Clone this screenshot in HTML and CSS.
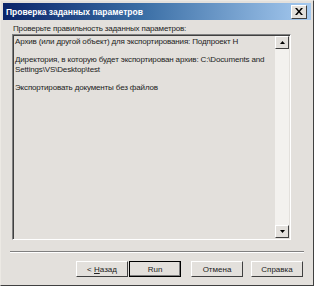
FILE: index.html
```html
<!DOCTYPE html>
<html lang="ru">
<head>
    <meta charset="UTF-8">
    <title>Проверка заданных параметров</title>
    <link rel="stylesheet" href="styles.css">
</head>
<body>
    <div class="dialog">
        <div class="title-bar">
            <span class="title-text">Проверка заданных параметров</span>
            <span class="close-btn">
                <svg width="8" height="7" viewBox="0 0 8 7">
                    <path d="M0 0h2l2 2.5 2-2.5h2l-3 3.5 3 3.5h-2l-2-2.5-2 2.5h-2l3-3.5z" fill="#000"/>
                </svg>
            </span>
        </div>

        <div class="dialog-body">
            <div class="caption">Проверьте правильность заданных параметров:</div>
            <div class="summary">
                <div class="summary-text">
                    <p>Архив (или другой объект) для экспортирования: Подпроект Н</p>
                    <p>Директория, в которую будет экспортирован архив: C:\Documents and Settings\VS\Desktop\test</p>
                    <p>Экспортировать документы без файлов</p>
                </div>
                <div class="scrollbar">
                    <span class="scroll-btn">
                        <svg width="5" height="3" viewBox="0 0 5 3"><path d="M2.5 0L5 3H0z" fill="#000"/></svg>
                    </span>
                    <span class="scroll-track"></span>
                    <span class="scroll-btn">
                        <svg width="5" height="3" viewBox="0 0 5 3"><path d="M0 0h5L2.5 3z" fill="#000"/></svg>
                    </span>
                </div>
            </div>
        </div>

        <div class="separator"></div>

        <div class="button-row">
            <button class="btn">&lt; <u>Н</u>азад</button>
            <button class="btn default">Run</button>
            <button class="btn gap-left">Отмена</button>
            <button class="btn">Справка</button>
        </div>
    </div>
</body>
</html>
```

FILE: styles.css
```css
* {
    margin: 0;
    padding: 0;
    box-sizing: border-box;
}

body {
    font-family: 'Liberation Sans', Arial, sans-serif;
    font-size: 8px;
    letter-spacing: -0.15px;
    background: #e3e0dc;
    width: 314px;
    height: 286px;
    overflow: hidden;
}

.dialog {
    width: 314px;
    height: 286px;
    border: 1px solid #404040;
    border-top-color: #ece9e4;
    border-left-color: #ece9e4;
    background: #e3e0dc;
    display: flex;
    flex-direction: column;
    padding: 2px;
}

.title-bar {
    height: 17px;
    background: linear-gradient(90deg, #0a246a 0%, #3a6ea5 45%, #a6caf0 100%);
    display: flex;
    align-items: center;
    justify-content: space-between;
    padding: 0 4px 0 3px;
}

.title-text {
    color: #fff;
    font-weight: bold;
    font-size: 8.5px;
    letter-spacing: 0;
}

.close-btn {
    width: 16px;
    height: 14px;
    background: #e3e0dc;
    border: 1px solid #404040;
    border-top-color: #fff;
    border-left-color: #fff;
    display: flex;
    align-items: center;
    justify-content: center;
}

.dialog-body {
    padding: 4px 20px 0 9px;
}

.caption {
    color: #222;
    height: 10px;
    line-height: 10px;
    padding-left: 1px;
}

.summary {
    height: 206px;
    display: flex;
    border: 1px solid #fff;
    border-top-color: #808080;
    border-left-color: #808080;
    box-shadow: inset 1px 1px 0 #404040;
}

.summary-text {
    flex: 1;
    padding: 2px 2px 3px 2px;
    line-height: 10px;
    color: #222;
}

.summary-text p {
    margin-bottom: 8px;
}

.scrollbar {
    width: 14px;
    display: flex;
    flex-direction: column;
    padding: 1px 0 1px 0;
    margin-right: 1px;
}

.scroll-btn {
    height: 13px;
    background: #e3e0dc;
    border: 1px solid #404040;
    border-top-color: #fff;
    border-left-color: #fff;
    display: flex;
    align-items: center;
    justify-content: center;
}

.scroll-track {
    flex: 1;
    background: #f3f1ee;
}

.separator {
    margin: 11px 7px 0 7px;
    height: 2px;
    border-top: 1px solid #808080;
    border-bottom: 1px solid #fff;
}

.button-row {
    display: flex;
    justify-content: flex-end;
    gap: 1px;
    padding: 8px 8px 0 0;
}

.btn {
    width: 52px;
    height: 16px;
    font-family: inherit;
    font-size: 8px;
    letter-spacing: 0;
    color: #222;
    background: #e3e0dc;
    border: 1px solid #404040;
    border-top-color: #fff;
    border-left-color: #fff;
}

.btn u {
    text-decoration: underline;
}

.btn.default {
    outline: 1px solid #000;
    outline-offset: -1px;
    box-shadow: inset -1px -1px 0 #808080;
}

.gap-left {
    margin-left: 9px;
}

.btn + .btn:last-child {
    margin-left: 7px;
}
```
